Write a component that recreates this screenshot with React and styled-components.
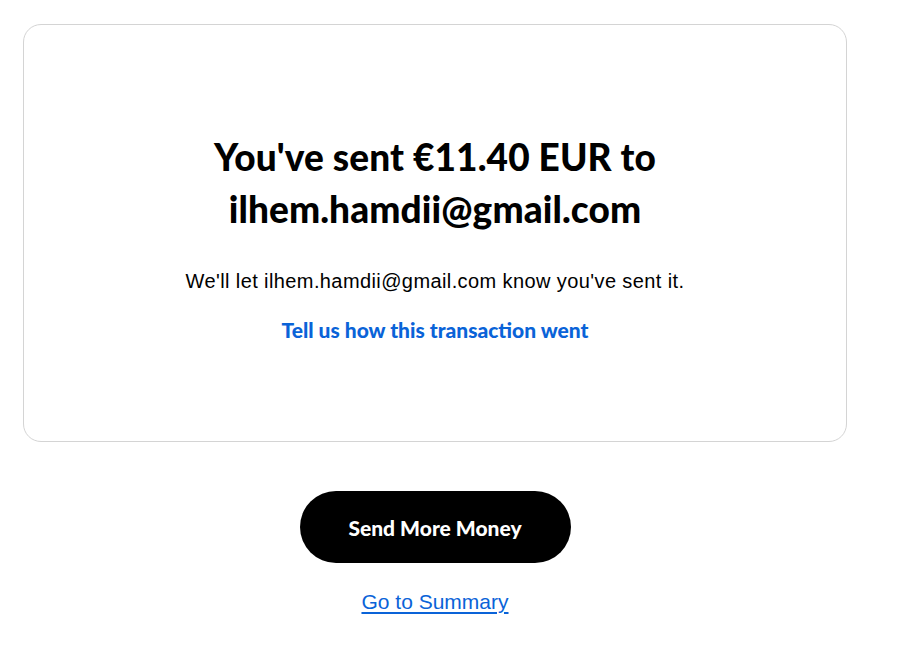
import React from "react";
import styled, { createGlobalStyle } from "styled-components";

const GlobalStyle = createGlobalStyle`
  body {
    margin: 0;
    background: #fff;
    font-family: "Liberation Sans", Arial, sans-serif;
    color: #000;
  }
`;

const Page = styled.div`
  padding: 24px 0 0 23px;
  width: 824px;
`;

const Card = styled.section`
  box-sizing: border-box;
  height: 418px;
  border: 1px solid #d4d4d4;
  border-radius: 18px;
  padding: 106px 40px 0;
  display: flex;
  flex-direction: column;
  align-items: center;
  text-align: center;
`;

const Heading = styled.h1`
  margin: 0;
  width: 460px;
  font-family: Lato, "Liberation Sans", sans-serif;
  font-weight: 900;
  font-size: 37px;
  line-height: 52px;
  letter-spacing: 0.1px;
`;

const Message = styled.p`
  margin: 32px 0 0;
  font-size: 20px;
  line-height: 28px;
  letter-spacing: 0.4px;
`;

const FeedbackLink = styled.a`
  margin-top: 22px;
  font-family: Lato, "Liberation Sans", sans-serif;
  font-weight: 900;
  font-size: 21px;
  line-height: 26px;
  color: #0a63d8;
  text-decoration: none;
  cursor: pointer;
`;

const Actions = styled.div`
  display: flex;
  flex-direction: column;
  align-items: center;
  padding-top: 49px;
`;

const PrimaryButton = styled.button`
  width: 271px;
  height: 72px;
  border: none;
  border-radius: 36px;
  background: #000;
  color: #fff;
  font-family: Lato, "Liberation Sans", sans-serif;
  font-weight: 900;
  font-size: 21px;
  cursor: pointer;
`;

const SummaryLink = styled.a`
  margin-top: 25px;
  font-size: 21px;
  line-height: 28px;
  color: #0a63d8;
  text-decoration: underline;
  text-underline-offset: 3px;
  cursor: pointer;
`;

export default function App() {
  const email = "ilhem.hamdii@gmail.com";
  return (
    <>
      <GlobalStyle />
      <Page>
        <Card>
          <Heading>
            You've sent €11.40 EUR to {email}
          </Heading>
          <Message>We'll let {email} know you've sent it.</Message>
          <FeedbackLink>Tell us how this transaction went</FeedbackLink>
        </Card>
        <Actions>
          <PrimaryButton>Send More Money</PrimaryButton>
          <SummaryLink>Go to Summary</SummaryLink>
        </Actions>
      </Page>
    </>
  );
}
